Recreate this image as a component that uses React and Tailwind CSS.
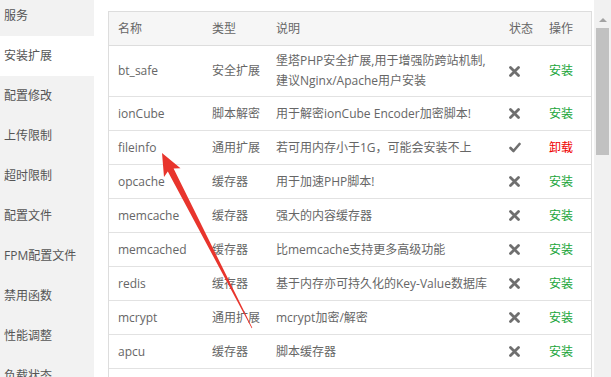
import React from 'react';

const menu = ['服务', '安装扩展', '配置修改', '上传限制', '超时限制', '配置文件', 'FPM配置文件', '禁用函数', '性能调整', '负载状态'];

const rows = [
  { name: 'bt_safe', type: '安全扩展', desc: ['堡塔PHP安全扩展,用于增强防跨站机制,', '建议Nginx/Apache用户安装'], on: false },
  { name: 'ionCube', type: '脚本解密', desc: ['用于解密ionCube Encoder加密脚本!'], on: false },
  { name: 'fileinfo', type: '通用扩展', desc: ['若可用内存小于1G，可能会安装不上'], on: true },
  { name: 'opcache', type: '缓存器', desc: ['用于加速PHP脚本!'], on: false },
  { name: 'memcache', type: '缓存器', desc: ['强大的内容缓存器'], on: false },
  { name: 'memcached', type: '缓存器', desc: ['比memcache支持更多高级功能'], on: false },
  { name: 'redis', type: '缓存器', desc: ['基于内存亦可持久化的Key-Value数据库'], on: false },
  { name: 'mcrypt', type: '通用扩展', desc: ['mcrypt加密/解密'], on: false },
  { name: 'apcu', type: '缓存器', desc: ['脚本缓存器'], on: false },
  { name: '', type: '', desc: [''], on: null },
];

const cols = 'grid grid-cols-[94px_64px_233px_40px_51px]';

const Cross = () => (
  <svg width="11" height="11" viewBox="0 0 11 11">
    <path d="M1.5 1.5 L9.5 9.5 M9.5 1.5 L1.5 9.5" stroke="#6f6f6f" strokeWidth="2.8" strokeLinecap="round" />
  </svg>
);

const Check = () => (
  <svg width="12" height="11" viewBox="0 0 12 11">
    <path d="M1.5 6 L4.5 9 L10.5 2" stroke="#6f6f6f" strokeWidth="2.6" fill="none" strokeLinecap="round" strokeLinejoin="round" />
  </svg>
);

const App = () => {
  return (
    <div
      className="relative flex w-[611px] h-[377px] overflow-hidden bg-white text-[12px] text-[#666]"
      style={{ fontFamily: '"Open Sans", "Noto Sans CJK SC", sans-serif' }}
    >
      <aside className="w-[94px] shrink-0 bg-[#f2f2f2]">
        <div className="-mt-[4px]">
          {menu.map((m) => (
            <div
              key={m}
              className={`h-10 flex items-center pl-[4px] text-[#555] ${m === '安装扩展' ? 'bg-white' : ''}`}
            >
              {m}
            </div>
          ))}
        </div>
      </aside>

      <main className="w-[500px] shrink-0 pt-[11px] pl-[14px]">
        <div className="w-[484px] border border-[#ddd] border-b-0">
          <div className={`${cols} h-[34px] items-center bg-[#f6f6f6] border-b border-[#ddd]`}>
            <div className="pl-[9px]">名称</div>
            <div className="pl-[9px]">类型</div>
            <div className="pl-[9px]">说明</div>
            <div className="pl-[9px]">状态</div>
            <div className="pl-[9px]">操作</div>
          </div>
          {rows.map((r, i) => (
            <div
              key={i}
              className={`${cols} ${r.desc.length > 1 ? 'h-[51px]' : 'h-[34px]'} items-center border-b border-[#e2e2e2]`}
            >
              <div className="pl-[9px]">{r.name}</div>
              <div className="pl-[9px]">{r.type}</div>
              <div className="pl-[9px] leading-[20px] whitespace-nowrap">
                {r.desc.map((d, j) => (
                  <div key={j}>{d}</div>
                ))}
              </div>
              <div className="pl-[9px] flex">{r.on === null ? null : r.on ? <Check /> : <Cross />}</div>
              <div className="pl-[9px]">
                {r.on === null ? null : r.on ? (
                  <span className="text-[#ef0000]">卸载</span>
                ) : (
                  <span className="text-[#20a53a]">安装</span>
                )}
              </div>
            </div>
          ))}
        </div>
      </main>

      <div className="w-[17px] shrink-0 bg-[#f1f1f1] flex flex-col items-center">
        <div className="h-[28px] flex items-center justify-center pt-[12px]">
          <div className="w-0 h-0 border-l-[4px] border-r-[4px] border-b-[4px] border-l-transparent border-r-transparent border-b-[#a3a3a3]" />
        </div>
        <div className="w-[13px] h-[127px] bg-[#c1c1c1]" />
      </div>

      <svg className="absolute inset-0 pointer-events-none" width="611" height="377">
        <polygon
          points="162,153 180.5,168.3 173.6,168.6 252.3,327.8 251.7,328.2 167.8,171.4 164,177"
          fill="#e8352d"
        />
      </svg>
    </div>
  );
};

export default App;
